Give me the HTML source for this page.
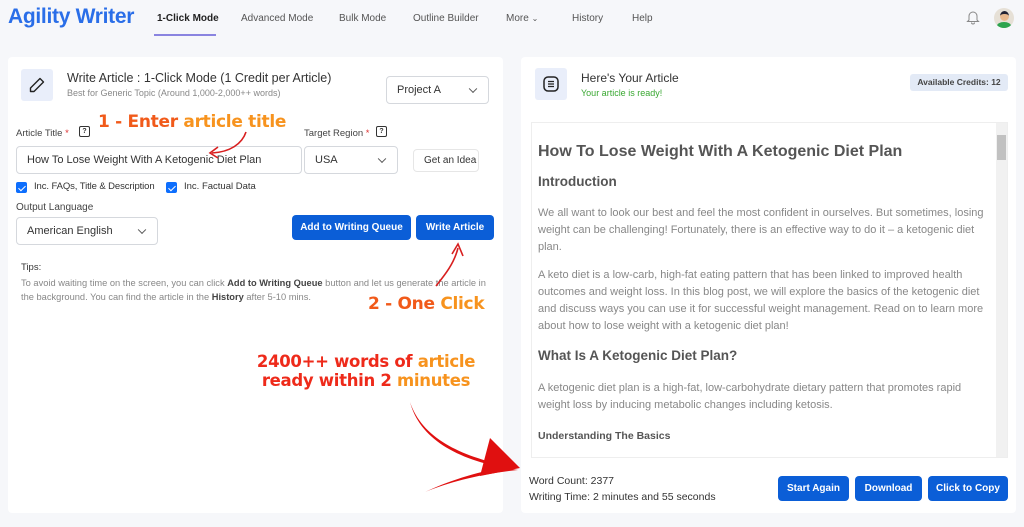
<!DOCTYPE html>
<html><head><meta charset="utf-8"><style>
*{margin:0;padding:0;box-sizing:border-box}
body{width:1024px;height:527px;background:#f6f7fa;font-family:"Liberation Sans",sans-serif;position:relative;overflow:hidden;color:#333}
.a{position:absolute;white-space:nowrap}
.card{position:absolute;background:#fff;border-radius:4px}
.btn{position:absolute;background:#0b5ed7;color:#fff;font-size:10px;font-weight:bold;border-radius:4px;display:flex;align-items:center;justify-content:center}
.sel{position:absolute;background:#fff;border:1px solid #d5d8dd;border-radius:4px;font-size:11px;color:#333;display:flex;align-items:center;padding-left:10px}
.chev{position:absolute;right:12px;top:50%;width:6px;height:6px;border-right:1.3px solid #555;border-bottom:1.3px solid #555;transform:translateY(-70%) rotate(45deg)}
.cb{position:absolute;width:11px;height:11px;background:#0d6efd;border-radius:2px}
.cb:after{content:"";position:absolute;left:3.5px;top:1.5px;width:3px;height:6px;border:solid #fff;border-width:0 1.5px 1.5px 0;transform:rotate(45deg)}
.nav{font-size:10px;color:#555;top:13px}
.p{font-size:11px;color:#888;line-height:17px;white-space:normal;width:440px}
.or{font-weight:bold;font-family:"DejaVu Sans",sans-serif;letter-spacing:-0.3px}
</style></head><body>
<div class="a" style="left:8px;top:5px;font-size:21px;font-weight:bold;color:#2a6ee8;letter-spacing:-0.3px">Agility Writer</div>
<div class="a nav" style="left:157px;color:#222;font-weight:bold">1-Click Mode</div>
<div class="a" style="left:154px;top:34px;width:62px;height:2px;background:#8a84e0"></div>
<div class="a nav" style="left:241px">Advanced Mode</div>
<div class="a nav" style="left:339px">Bulk Mode</div>
<div class="a nav" style="left:413px">Outline Builder</div>
<div class="a nav" style="left:506px">More <span style="font-size:8px">&#8964;</span></div>
<div class="a nav" style="left:572px">History</div>
<div class="a nav" style="left:632px">Help</div>
<svg class="a" style="left:966px;top:10px" width="14" height="15" viewBox="0 0 14 15"><path d="M3 10V6a4 4 0 0 1 8 0v4l1.5 1.5h-11z M5.5 12.5a1.5 1.5 0 0 0 3 0" fill="none" stroke="#888" stroke-width="1"/></svg>
<div class="a" style="left:994px;top:8px;width:20px;height:20px;border-radius:50%;background:#e6e0d6;overflow:hidden"><div style="position:absolute;left:6px;top:3px;width:9px;height:10px;border-radius:50%;background:#e9b98e;border-top:3px solid #223"></div><div style="position:absolute;left:3px;top:14px;width:14px;height:8px;border-radius:50%;background:#2da44e"></div></div>

<div class="card" style="left:8px;top:57px;width:495px;height:456px"></div>
<div class="a" style="left:21px;top:69px;width:32px;height:32px;background:#e9eefa;border-radius:3px"></div>
<svg class="a" style="left:28px;top:76px" width="18" height="18" viewBox="0 0 18 18"><path d="M12 2.5l3.5 3.5L6 15.5H2.5V12z" fill="none" stroke="#222" stroke-width="1.4" stroke-linejoin="round"/></svg>
<div class="a" style="left:67px;top:71px;font-size:12.5px;color:#333">Write Article : 1-Click Mode (1 Credit per Article)</div>
<div class="a" style="left:67px;top:88px;font-size:9px;color:#888">Best for Generic Topic (Around 1,000-2,000++ words)</div>
<div class="sel" style="left:386px;top:76px;width:103px;height:28px">Project A<span class="chev"></span></div>

<div class="a" style="left:16px;top:128px;font-size:9.5px;color:#444">Article Title <span style="color:#d33">*</span></div>
<div class="a" style="left:79px;top:126px;width:11px;height:11px;border:1.3px solid #333;border-radius:2px;font-size:7px;text-align:center;line-height:9px;font-weight:bold">?</div>
<div class="a" style="left:304px;top:128px;font-size:9.5px;color:#444">Target Region <span style="color:#d33">*</span></div>
<div class="a" style="left:376px;top:126px;width:11px;height:11px;border:1.3px solid #333;border-radius:2px;font-size:7px;text-align:center;line-height:9px;font-weight:bold">?</div>
<div class="sel" style="left:16px;top:146px;width:286px;height:28px">How To Lose Weight With A Ketogenic Diet Plan</div>
<div class="sel" style="left:304px;top:146px;width:94px;height:28px">USA<span class="chev"></span></div>
<div class="sel" style="left:413px;top:149px;width:66px;height:23px;font-size:10px;border-color:#e6e6e6">Get an Idea</div>
<div class="cb" style="left:16px;top:182px"></div>
<div class="a" style="left:34px;top:181px;font-size:9.5px;color:#333;letter-spacing:-0.1px">Inc. FAQs, Title &amp; Description</div>
<div class="cb" style="left:166px;top:182px"></div>
<div class="a" style="left:184px;top:181px;font-size:9.5px;color:#333">Inc. Factual Data</div>
<div class="a" style="left:16px;top:202px;font-size:10px;color:#444">Output Language</div>
<div class="sel" style="left:16px;top:217px;width:142px;height:28px">American English<span class="chev"></span></div>
<div class="btn" style="left:292px;top:215px;width:119px;height:25px">Add to Writing Queue</div>
<div class="btn" style="left:416px;top:215px;width:78px;height:25px">Write Article</div>
<div class="a" style="left:21px;top:262px;font-size:9.5px;color:#333">Tips:</div>
<div class="a p" style="left:21px;top:277px;font-size:9.3px;line-height:13.5px;width:470px;color:#888">To avoid waiting time on the screen, you can click <b style="color:#444">Add to Writing Queue</b> button and let us generate the article in the background. You can find the article in the <b style="color:#444">History</b> after 5-10 mins.</div>

<div class="a or" style="left:98px;top:112px;font-size:17px;color:#f15a1a">1 - Enter <span style="color:#f7931e">article title</span></div>
<svg class="a" style="left:200px;top:130px" width="50" height="30"><path d="M46 2 C42 14 30 22 12 23" fill="none" stroke="#d81f1f" stroke-width="1.6"/><path d="M18 17 L10 23 L18 28" fill="none" stroke="#d81f1f" stroke-width="1.6"/></svg>
<div class="a or" style="left:368px;top:294px;font-size:17px;color:#f15a1a">2 - One <span style="color:#f7931e">Click</span></div>
<svg class="a" style="left:430px;top:240px" width="40" height="50"><path d="M6 46 C14 36 24 24 28 8" fill="none" stroke="#d81f1f" stroke-width="1.6"/><path d="M22 14 L28 4 L33 16" fill="none" stroke="#d81f1f" stroke-width="1.6"/></svg>
<div class="a or" style="left:255px;top:352px;font-size:16.5px;color:#ee2a1a;line-height:19px;text-align:center;width:222px">2400++ words of <span style="color:#f7931e">article</span><br>ready within 2 <span style="color:#f7931e">minutes</span></div>
<svg class="a" style="left:400px;top:400px" width="125" height="95"><path d="M10 2 C20 40 60 62 118 70 C80 74 50 82 25 92 C55 78 80 72 108 66 C60 56 22 38 10 2z" fill="#e01010"/><path d="M90 38 L120 68 L80 76" fill="#e01010"/></svg>

<div class="card" style="left:521px;top:57px;width:495px;height:456px"></div>
<div class="a" style="left:535px;top:68px;width:32px;height:32px;background:#e9eefa;border-radius:3px"></div>
<svg class="a" style="left:542px;top:75px" width="18" height="18" viewBox="0 0 18 18"><rect x="2" y="2" width="14" height="14" rx="4" fill="none" stroke="#222" stroke-width="1.5"/><path d="M6 6.5h6M6 9h6M6 11.5h6" stroke="#222" stroke-width="1.3"/></svg>
<div class="a" style="left:581px;top:71px;font-size:12px;color:#333">Here's Your Article</div>
<div class="a" style="left:581px;top:88px;font-size:9px;color:#3aa832">Your article is ready!</div>
<div class="a" style="left:910px;top:74px;width:98px;height:17px;background:#e3eaf6;border-radius:3px;font-size:8.5px;font-weight:bold;color:#444;text-align:center;line-height:17px">Available Credits: 12</div>

<div class="a" style="left:531px;top:122px;width:477px;height:336px;border:1px solid #eee;background:#fff"></div>
<div class="a" style="left:996px;top:123px;width:11px;height:334px;background:#f1f1f1"></div>
<div class="a" style="left:997px;top:135px;width:9px;height:25px;background:#c1c1c1"></div>
<div class="a" style="left:538px;top:143px;font-size:16px;font-weight:bold;color:#555">How To Lose Weight With A Ketogenic Diet Plan</div>
<div class="a" style="left:538px;top:174px;font-size:13.5px;font-weight:bold;color:#555">Introduction</div>
<div class="a p" style="left:538px;top:205px;width:450px">We all want to look our best and feel the most confident in ourselves. But sometimes, losing weight can be challenging! Fortunately, there is an effective way to do it – a ketogenic diet plan.</div>
<div class="a p" style="left:538px;top:267px;width:450px">A keto diet is a low-carb, high-fat eating pattern that has been linked to improved health outcomes and weight loss. In this blog post, we will explore the basics of the ketogenic diet and discuss ways you can use it for successful weight management. Read on to learn more about how to lose weight with a ketogenic diet plan!</div>
<div class="a" style="left:538px;top:348px;font-size:13.5px;font-weight:bold;color:#555">What Is A Ketogenic Diet Plan?</div>
<div class="a p" style="left:538px;top:380px;width:450px">A ketogenic diet plan is a high-fat, low-carbohydrate dietary pattern that promotes rapid weight loss by inducing metabolic changes including ketosis.</div>
<div class="a" style="left:538px;top:430px;font-size:10.5px;font-weight:bold;color:#555">Understanding The Basics</div>

<div class="a" style="left:529px;top:475px;font-size:10.5px;color:#333">Word Count: 2377</div>
<div class="a" style="left:529px;top:491px;font-size:10.5px;color:#333">Writing Time: 2 minutes and 55 seconds</div>
<div class="btn" style="left:778px;top:476px;width:71px;height:25px">Start Again</div>
<div class="btn" style="left:855px;top:476px;width:67px;height:25px">Download</div>
<div class="btn" style="left:928px;top:476px;width:80px;height:25px">Click to Copy</div>
</body></html>
